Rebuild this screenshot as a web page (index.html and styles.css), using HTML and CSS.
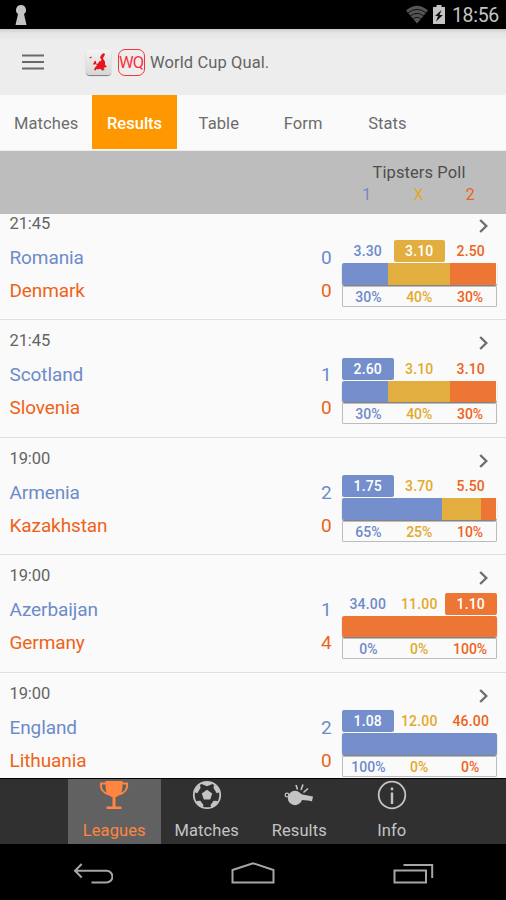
FILE: index.html
```html
<!DOCTYPE html>
<html lang="en">
<head>
    <meta charset="utf-8">
    <title>World Cup Qual.</title>
    <link rel="stylesheet" href="styles.css">
</head>
<body>
    <div class="status-bar">
        <svg class="keyhole" width="12" height="20" viewBox="0 0 12 20"><path d="M6 0a5 5 0 0 0-3 9L.5 20h11L9 9a5 5 0 0 0-3-9z" fill="#c4c4c4"/></svg>
        <div class="status-icons">
            <svg width="24" height="19" viewBox="0 0 24 19">
                <path d="M12 18.500L1 5.500Q12-4 23 5.500z" fill="#555"/>
                <path d="M2.500 8.200Q12 .5 21.500 8.200M5 11.200Q12 5.500 19 11.200M7.500 14.200Q12 10.500 16.500 14.200" fill="none" stroke="#111" stroke-width="1"/>
            </svg>
            <svg width="12" height="19" viewBox="0 0 12 19"><path d="M3.500 0h5v2H12v17H0V2h3.500z" fill="#c4c4c4"/><path d="M8.500 5L2 11h3l-2 5.500L10 10H6.500z" fill="#111"/></svg>
            <span class="clock">18:56</span>
        </div>
    </div>

    <header class="app-bar">
        <svg class="menu-icon" width="22" height="16" viewBox="0 0 22 16"><path d="M0 1.500h22M0 8h22M0 14.500h22" stroke="#6a6a6a" stroke-width="2"/></svg>
        <span class="league-icon">
            <svg width="25" height="25" viewBox="0 0 25 25"><path d="M3 7.500l3-1-1 2zM14 7.500l1.500-3L18 3l1 1.500-2 3.500.5 1.500 1.500 2v3l2 2.500-2.500.5-1 1.500 1.500 1-3 .5-2-2-1.500 1-2-.5-1 1.500-1.500-.5 1-2.500L11 15.500l-1-1.500 2-.5 1.500-2.500 1 .5 1-2z" fill="#e8141c"/><path d="M7 14.500L8 12l1.500-1.500 1 3-1.500 1z" fill="#e8141c"/></svg>
        </span>
        <span class="league-badge">WQ</span>
        <span class="app-title">World Cup Qual.</span>
    </header>

    <nav class="tabs">
        <a class="tab">Matches</a>
        <a class="tab active">Results</a>
        <a class="tab">Table</a>
        <a class="tab">Form</a>
        <a class="tab">Stats</a>
    </nav>

    <div class="poll-header">
        <div class="poll-title">Tipsters Poll</div>
        <div class="poll-columns">
            <span class="home">1</span>
            <span class="draw">X</span>
            <span class="away">2</span>
        </div>
    </div>

    <main class="results">
        <section class="match">
            <div class="teams">
                <div class="time">21:45</div>
                <div class="team home"><span>Romania</span><span>0</span></div>
                <div class="team away"><span>Denmark</span><span>0</span></div>
            </div>
            <div class="poll">
                <svg class="chevron" width="9" height="14" viewBox="0 0 9 14"><path d="M1.200 1L7.300 7l-6.100 6" fill="none" stroke="#6e6e6e" stroke-width="2.400"/></svg>
                <div class="odds"><span class="home">3.30</span><span class="draw picked">3.10</span><span class="away">2.50</span></div>
                <div class="bar"><i class="bar-home" style="width: 30%"></i><i class="bar-draw" style="width: 40%"></i><i class="bar-away" style="width: 30%"></i></div>
                <div class="percents"><span class="home">30%</span><span class="draw">40%</span><span class="away">30%</span></div>
            </div>
        </section>

        <section class="match">
            <div class="teams">
                <div class="time">21:45</div>
                <div class="team home"><span>Scotland</span><span>1</span></div>
                <div class="team away"><span>Slovenia</span><span>0</span></div>
            </div>
            <div class="poll">
                <svg class="chevron" width="9" height="14" viewBox="0 0 9 14"><path d="M1.200 1L7.300 7l-6.100 6" fill="none" stroke="#6e6e6e" stroke-width="2.400"/></svg>
                <div class="odds"><span class="home picked">2.60</span><span class="draw">3.10</span><span class="away">3.10</span></div>
                <div class="bar"><i class="bar-home" style="width: 30%"></i><i class="bar-draw" style="width: 40%"></i><i class="bar-away" style="width: 30%"></i></div>
                <div class="percents"><span class="home">30%</span><span class="draw">40%</span><span class="away">30%</span></div>
            </div>
        </section>

        <section class="match">
            <div class="teams">
                <div class="time">19:00</div>
                <div class="team home"><span>Armenia</span><span>2</span></div>
                <div class="team away"><span>Kazakhstan</span><span>0</span></div>
            </div>
            <div class="poll">
                <svg class="chevron" width="9" height="14" viewBox="0 0 9 14"><path d="M1.200 1L7.300 7l-6.100 6" fill="none" stroke="#6e6e6e" stroke-width="2.400"/></svg>
                <div class="odds"><span class="home picked">1.75</span><span class="draw">3.70</span><span class="away">5.50</span></div>
                <div class="bar"><i class="bar-home" style="width: 65%"></i><i class="bar-draw" style="width: 25%"></i><i class="bar-away" style="width: 10%"></i></div>
                <div class="percents"><span class="home">65%</span><span class="draw">25%</span><span class="away">10%</span></div>
            </div>
        </section>

        <section class="match">
            <div class="teams">
                <div class="time">19:00</div>
                <div class="team home"><span>Azerbaijan</span><span>1</span></div>
                <div class="team away"><span>Germany</span><span>4</span></div>
            </div>
            <div class="poll">
                <svg class="chevron" width="9" height="14" viewBox="0 0 9 14"><path d="M1.200 1L7.300 7l-6.100 6" fill="none" stroke="#6e6e6e" stroke-width="2.400"/></svg>
                <div class="odds"><span class="home">34.00</span><span class="draw">11.00</span><span class="away picked">1.10</span></div>
                <div class="bar"><i class="bar-away" style="width: 100%"></i></div>
                <div class="percents"><span class="home">0%</span><span class="draw">0%</span><span class="away">100%</span></div>
            </div>
        </section>

        <section class="match">
            <div class="teams">
                <div class="time">19:00</div>
                <div class="team home"><span>England</span><span>2</span></div>
                <div class="team away"><span>Lithuania</span><span>0</span></div>
            </div>
            <div class="poll">
                <svg class="chevron" width="9" height="14" viewBox="0 0 9 14"><path d="M1.200 1L7.300 7l-6.100 6" fill="none" stroke="#6e6e6e" stroke-width="2.400"/></svg>
                <div class="odds"><span class="home picked">1.08</span><span class="draw">12.00</span><span class="away">46.00</span></div>
                <div class="bar"><i class="bar-home" style="width: 100%"></i></div>
                <div class="percents"><span class="home">100%</span><span class="draw">0%</span><span class="away">0%</span></div>
            </div>
        </section>
    </main>

    <nav class="bottom-nav">
        <a class="nav-item active">
            <svg width="30" height="30" viewBox="0 0 30 30">
                <path d="M6.500 1h17v4c0 6-1.500 9.500-4 10.500L17.500 17h-5l-2-1.500C8 14.500 6.500 11 6.500 5z" fill="#ff8540"/>
                <path d="M7 3.500H2C1 9 4.500 13 10 14.500M23 3.500h5c1 5.500-2.500 9.500-8 11" fill="none" stroke="#ff8540" stroke-width="2"/>
                <path d="M13.500 15h3v11.500h6V29h-15v-2.500h6z" fill="#ff8540"/>
            </svg>
            <span>Leagues</span>
        </a>
        <a class="nav-item">
            <svg width="30" height="30" viewBox="0 0 30 30">
                <circle cx="15" cy="15" r="13.200" fill="none" stroke="#c4c4c4" stroke-width="1.800"/>
                <path d="M15 9.800l5.200 3.800-2 6h-6.400l-2-6zM9 3.800l6 2.400 6-2.400-6-2.500zM2 12l3.300 1.200L8.500 8 8 4.500 3 9zM28 12l-3.300 1.200L21.500 8l.5-3.500L27 9zM4.300 21l4-.3 3.200 4.300-1 3-5-3zM25.700 21l-4-.3-3.200 4.300 1 3 5-3z" fill="#c4c4c4"/>
            </svg>
            <span>Matches</span>
        </a>
        <a class="nav-item">
            <svg width="30" height="30" viewBox="0 0 30 30">
                <circle cx="11" cy="18" r="7.200" fill="#c4c4c4"/>
                <path d="M11 10.800l7.500 3.700 10.500 2-1 4.800-4-.8-6.400-.5z" fill="#c4c4c4"/>
                <circle cx="3" cy="15" r="1.800" fill="none" stroke="#c4c4c4" stroke-width="1.200"/>
                <path d="M13.500 9.500l-1.500-4.500M17 10l2-5.500M19.500 12.500l4.500-4" stroke="#c4c4c4" stroke-width="1.600"/>
            </svg>
            <span>Results</span>
        </a>
        <a class="nav-item">
            <svg width="30" height="30" viewBox="0 0 30 30">
                <circle cx="15" cy="15" r="13.300" fill="none" stroke="#c4c4c4" stroke-width="1.800"/>
                <path d="M15 12.500V24M15 7.500v2.700" stroke="#c4c4c4" stroke-width="2.400"/>
            </svg>
            <span>Info</span>
        </a>
    </nav>

    <div class="system-nav">
        <svg width="40" height="24" viewBox="0 0 40 24"><path d="M2 8.700h31.500a5.900 5.900 0 0 1 0 11.800H18.500M8.700 2L2 8.700l6.700 6.800" fill="none" stroke="#a6a6a6" stroke-width="2"/></svg>
        <svg width="44" height="24" viewBox="0 0 44 24"><path d="M1.500 8L22 1.200 42.500 8v12.500h-41z" fill="none" stroke="#a6a6a6" stroke-width="2"/></svg>
        <svg width="41" height="24" viewBox="0 0 41 24"><path d="M1.500 8.500h31.500v12H1.500zM10.500 3h28.700v13" fill="none" stroke="#a6a6a6" stroke-width="2"/></svg>
    </div>
</body>
</html>
```
FILE: styles.css
```css
* {
    box-sizing: border-box;
}

body {
    margin: 0;
    width: 506px;
    height: 900px;
    overflow: hidden;
    display: flex;
    flex-direction: column;
    font-family: Roboto, sans-serif;
    color: #646464;
    background-color: #fafafa;
}

svg {
    display: block;
    flex-shrink: 0;
}

.home {
    color: #6d8acb;
}

.draw {
    color: #e2a92b;
}

.away {
    color: #ee6319;
}

/* Status bar */
.status-bar {
    height: 29px;
    flex-shrink: 0;
    display: flex;
    justify-content: space-between;
    align-items: center;
    padding: 0 7px 0 15px;
    background-color: #000;
}

.status-icons {
    display: flex;
    align-items: center;
    gap: 4px;
}

.clock {
    margin-left: 3px;
    font-size: 19.500px;
    line-height: 29px;
    letter-spacing: -0.3px;
    padding-top: 2px;
    color: #c4c4c4;
}

/* App bar */
.app-bar {
    height: 66px;
    flex-shrink: 0;
    display: flex;
    align-items: center;
    padding-left: 22px;
    background: linear-gradient(#cfcfcf, #e4e4e4 4px, #ededed 12px);
}

.league-icon {
    width: 25px;
    height: 25px;
    margin-left: 42px;
    border-radius: 4px;
    background: linear-gradient(#f4f4f4, #d6d6d6);
    box-shadow: 0 1px 1px #777;
}

.league-badge {
    width: 27px;
    height: 27px;
    margin-left: 6.500px;
    border: 1.5px solid #f5333a;
    border-radius: 7px;
    display: flex;
    justify-content: center;
    align-items: center;
    font-size: 16.500px;
    letter-spacing: -1px;
    color: #f5333a;
}

.app-title {
    margin-left: 5.500px;
    padding-top: 1px;
    font-size: 16.500px;
    letter-spacing: 0.1px;
}

/* Tabs */
.tabs {
    height: 56px;
    flex-shrink: 0;
    display: flex;
    align-items: flex-start;
    border-bottom: 1px solid #ececec;
}

.tab {
    width: 84.300px;
    height: 54px;
    line-height: 58px;
    text-align: center;
    font-size: 16.500px;
    letter-spacing: 0.1px;
    color: #6c6c6c;
}

.tab:first-child {
    width: 92.400px;
}

.tab.active {
    color: #fff;
    background-color: #ff9800;
    font-weight: 500;
    letter-spacing: 0;
}

.poll-header {
    height: 63px;
    flex-shrink: 0;
    padding: 10px 10px 0 341px;
    background-color: #bdbdbd;
    text-align: center;
}

.poll-title {
    padding-left: 1px;
    font-size: 16.500px;
    line-height: 23px;
    letter-spacing: 0.1px;
    color: #4e4e4e;
}

.poll-columns {
    display: grid;
    grid-template-columns: repeat(3, 1fr);
    font-size: 16px;
    line-height: 22px;
}

/* Match list, scrolled a little */
.results {
    flex: 1;
    min-height: 0;
    overflow: hidden;
}

.match {
    height: 117.500px;
    display: flex;
    justify-content: space-between;
    padding: 0 9.500px 0 9.500px;
    border-bottom: 1.500px solid #e0e0e0;
}

.match:first-child {
    margin-top: -11.300px;
}

.teams {
    width: 322px;
    padding-top: 10px;
}

.time {
    font-size: 16.500px;
    line-height: 22px;
    margin-bottom: 7px;
    letter-spacing: -0.1px;
}

.team {
    display: flex;
    justify-content: space-between;
    font-size: 19px;
    line-height: 32.800px;
    letter-spacing: -0.1px;
}

.poll {
    width: 154.500px;
    font-size: 14px;
    font-weight: 500;
}

.chevron {
    margin: 16px 9px 7.500px auto;
}

.odds,
.percents {
    display: grid;
    grid-template-columns: repeat(3, 1fr);
    height: 21px;
    line-height: 22px;
    text-align: center;
}

.odds {
    letter-spacing: 0.2px;
}

.picked {
    color: #fff;
    border-radius: 2px;
}

.home.picked,
.bar-home {
    background-color: #748fcc;
}

.draw.picked,
.bar-draw {
    background-color: #e2ae40;
}

.away.picked,
.bar-away {
    background-color: #ed7634;
}

.bar {
    height: 21.500px;
    margin-top: 2px;
    display: flex;
    border-radius: 2px;
    overflow: hidden;
    box-shadow: 0 1px 1px #777;
}

.percents {
    margin-top: 1px;
    border: 1px solid #bcbcbc;
    border-radius: 1px;
    line-height: 20px;
    font-size: 14px;
}

/* Bottom navigation */
.bottom-nav {
    height: 66px;
    flex-shrink: 0;
    display: flex;
    justify-content: center;
    background-color: #303030;
    border-top: 1px solid #000;
}

.nav-item {
    width: 92.500px;
    display: flex;
    flex-direction: column;
    align-items: center;
    padding-top: 1px;
    font-size: 16.500px;
    letter-spacing: 0.1px;
    color: #c4c4c4;
}

.nav-item span {
    margin-top: 9px;
    line-height: 24px;
}

.nav-item.active {
    background-color: #616161;
    color: #ff8540;
}

.system-nav {
    height: 56px;
    flex-shrink: 0;
    display: flex;
    justify-content: space-between;
    padding: 18px 72px 0 73px;
    background-color: #000;
}
```
